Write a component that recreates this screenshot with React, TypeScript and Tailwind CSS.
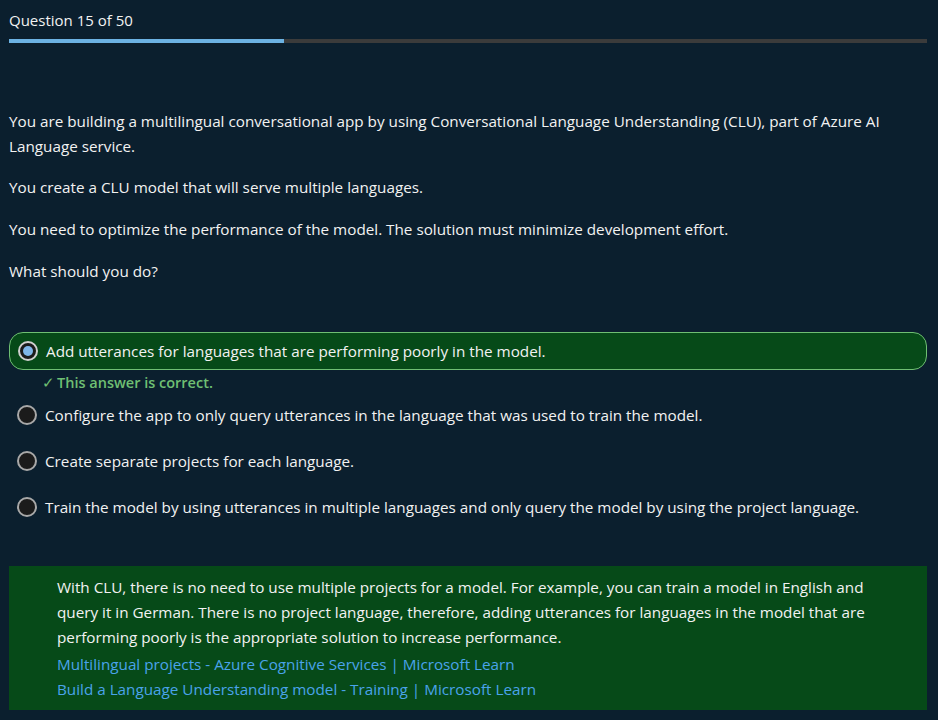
import React from "react";

const options = [
  "Add utterances for languages that are performing poorly in the model.",
  "Configure the app to only query utterances in the language that was used to train the model.",
  "Create separate projects for each language.",
  "Train the model by using utterances in multiple languages and only query the model by using the project language.",
];

function Radio({ checked }: { checked: boolean }) {
  return (
    <span
      className={
        "flex h-[20px] w-[20px] shrink-0 items-center justify-center rounded-full border-2 " +
        (checked ? "border-[#d0d0d0] bg-[#1b1b1b]" : "border-[#a8a8a8] bg-[#1b1b1b]")
      }
    >
      {checked && <span className="h-[10px] w-[10px] rounded-full bg-[#7eb6e8]" />}
    </span>
  );
}

export default function App() {
  return (
    <div
      className="min-h-[720px] w-full bg-[#0b1f2e] pl-[9px] pr-[11px] text-[15.25px] text-[#f2f2f2]"
      style={{ fontFamily: '"Open Sans", "Noto Sans", sans-serif' }}
    >
      <div className="pt-[9px] text-[15px] leading-[22px]">Question 15 of 50</div>
      <div className="mt-[8px] flex h-[4px] w-full bg-[#3b3b3b]">
        <div className="h-full w-[275px] bg-[#6cb2e3]" />
      </div>

      <div className="mt-[66px] leading-[25px]">
        <p>
          You are building a multilingual conversational app by using Conversational Language Understanding (CLU),
          part of Azure AI Language service.
        </p>
        <p className="mt-[16px]">You create a CLU model that will serve multiple languages.</p>
        <p className="mt-[17px]">You need to optimize the performance of the model. The solution must minimize development effort.</p>
        <p className="mt-[17px]">What should you do?</p>
      </div>

      <div className="mt-[48px] flex flex-col">
        <div className="flex h-[38px] items-center gap-[8px] rounded-[14px] border border-[#6fbf73] bg-[#064a18] pl-[8px]">
          <Radio checked />
          <span>{options[0]}</span>
        </div>
        <div className="flex h-[26px] items-center pl-[33px] font-semibold text-[#6fbf73] text-[14.5px]">
          <span className="mr-[2px] font-normal">✓</span>This answer is correct.
        </div>
        <div className="flex flex-col gap-[8px]">
          {options.slice(1).map((o) => (
            <div key={o} className="flex h-[38px] items-center gap-[8px] pl-[8px]">
              <Radio checked={false} />
              <span>{o}</span>
            </div>
          ))}
        </div>
      </div>

      <div className="mt-[40px] bg-[#064a18] pt-[9px] pb-[8px] pl-[48px] pr-[60px] leading-[25px]">
        <p>
          With CLU, there is no need to use multiple projects for a model. For example, you can train a model in English
          and query it in German. There is no project language, therefore, adding utterances for languages in the model
          that are performing poorly is the appropriate solution to increase performance.
        </p>
        <a className="mt-[2px] block text-[#4aa3ea]">Multilingual projects - Azure Cognitive Services | Microsoft Learn</a>
        <a className="block text-[#4aa3ea]">Build a Language Understanding model - Training | Microsoft Learn</a>
      </div>
    </div>
  );
}
